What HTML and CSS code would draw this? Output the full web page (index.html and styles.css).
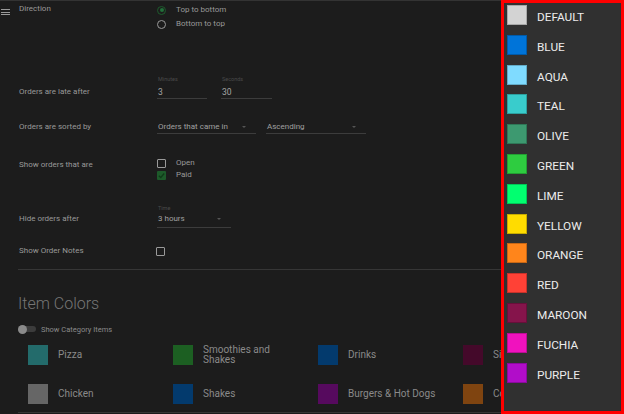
FILE: index.html
```html
<!DOCTYPE html>
<html lang="en">
<head>
<meta charset="utf-8">
<title>Settings</title>
<link rel="stylesheet" href="styles.css">
</head>
<body>
<div class="app">
  <div class="rail">
    <span class="menu"><i></i><i></i><i></i></span>
  </div>
  <main class="content">
    <section class="row row-direction">
      <div class="label">Direction</div>
      <div class="control stack">
        <div class="opt opt-radio"><span class="radio on"></span>Top to bottom</div>
        <div class="opt opt-radio"><span class="radio"></span>Bottom to top</div>
      </div>
    </section>

    <section class="row row-late">
      <div class="label label-under-mini">Orders are late after</div>
      <div class="control fields">
        <div class="field field-min">
          <div class="mini">Minutes</div>
          <div class="value">3</div>
        </div>
        <div class="field field-sec">
          <div class="mini">Seconds</div>
          <div class="value">30</div>
        </div>
      </div>
    </section>

    <section class="row row-sorted">
      <div class="label">Orders are sorted by</div>
      <div class="control selects">
        <div class="select select-order">Orders that came in<span class="caret"></span></div>
        <div class="select select-dir">Ascending<span class="caret"></span></div>
      </div>
    </section>

    <section class="row row-show">
      <div class="label label-show">Show orders that are</div>
      <div class="control stack">
        <div class="opt opt-check"><span class="check"></span>Open</div>
        <div class="opt opt-check"><span class="check on"><svg viewBox="0 0 10 10" width="9" height="9"><path d="M2 5.2 L4.2 7.2 L8 2.8" fill="none" stroke="#0f3a18" stroke-width="1.4"/></svg></span>Paid</div>
      </div>
    </section>

    <section class="row row-hide">
      <div class="label label-under-mini2">Hide orders after</div>
      <div class="control">
        <div class="field field-time">
          <div class="mini">Time</div>
          <div class="select select-time">3 hours<span class="caret"></span></div>
        </div>
      </div>
    </section>

    <section class="row row-notes">
      <div class="label">Show Order Notes</div>
      <div class="control"><span class="check check-notes"></span></div>
    </section>

    <div class="divider"></div>

    <h2 class="heading">Item Colors</h2>

    <div class="toggle-row">
      <span class="toggle"><span class="knob"></span></span>
      <span>Show Category Items</span>
    </div>

    <div class="item-grid">
      <div class="item"><span class="swatch" style="background:#236b6b"></span><span class="name">Pizza</span></div>
      <div class="item"><span class="swatch" style="background:#1c5f22"></span><span class="name">Smoothies and Shakes</span></div>
      <div class="item"><span class="swatch" style="background:#033a6d"></span><span class="name">Drinks</span></div>
      <div class="item"><span class="swatch" style="background:#44092a"></span><span class="name">Sides</span></div>
      <div class="item"><span class="swatch" style="background:#666666"></span><span class="name">Chicken</span></div>
      <div class="item"><span class="swatch" style="background:#033a6d"></span><span class="name">Shakes</span></div>
      <div class="item"><span class="swatch" style="background:#560a5e"></span><span class="name">Burgers &amp; Hot Dogs</span></div>
      <div class="item"><span class="swatch" style="background:#7f4410"></span><span class="name">Combos</span></div>
    </div>

    <div class="divider divider-bottom"></div>
  </main>

  <aside class="color-menu">
    <ul class="color-list">
      <li><span class="chip chip-default" style="background:#d3d3d3"></span>DEFAULT</li>
      <li><span class="chip" style="background:#0074d9"></span>BLUE</li>
      <li><span class="chip" style="background:#7fdbff"></span>AQUA</li>
      <li><span class="chip" style="background:#39cccc"></span>TEAL</li>
      <li><span class="chip" style="background:#3d9970"></span>OLIVE</li>
      <li><span class="chip" style="background:#2ecc40"></span>GREEN</li>
      <li><span class="chip" style="background:#01ff70"></span>LIME</li>
      <li><span class="chip" style="background:#ffdc00"></span>YELLOW</li>
      <li><span class="chip" style="background:#ff851b"></span>ORANGE</li>
      <li><span class="chip" style="background:#ff4136"></span>RED</li>
      <li><span class="chip" style="background:#85144b"></span>MAROON</li>
      <li><span class="chip" style="background:#f012be"></span>FUCHIA</li>
      <li><span class="chip" style="background:#b10dc9"></span>PURPLE</li>
    </ul>
  </aside>
</div>
</body>
</html>
```

FILE: styles.css
```css
* { box-sizing: border-box; }

html, body {
  margin: 0;
  padding: 0;
  width: 624px;
  height: 414px;
  overflow: hidden;
  background: #1c1c1c;
}

body {
  font-family: Roboto, "Liberation Sans", Arial, sans-serif;
  color: #9a9a9a;
}

.app {
  position: relative;
  display: flex;
  width: 624px;
  height: 414px;
  overflow: hidden;
  box-shadow: inset 0 1px 0 #333;
}

.rail {
  flex: none;
  width: 18px;
  padding: 9px 0 0 1px;
}

.menu {
  display: flex;
  flex-direction: column;
  gap: 1.6px;
  width: 9px;
}

.menu i {
  display: block;
  height: 1px;
  background: #9a9a9a;
}

.content {
  flex: none;
  width: 700px;
}

.row {
  display: flex;
}

.label {
  flex: none;
  width: 139px;
  font-size: 8px;
  line-height: 12px;
  color: #999;
  padding-left: 1px;
}

.control {
  display: flex;
}

.stack {
  flex-direction: column;
}

/* Direction */
.row-direction {
  padding-top: 3px;
}

.opt {
  display: flex;
  align-items: center;
  font-size: 8px;
  color: #999;
}

.opt-radio {
  line-height: 14px;
  gap: 10px;
}

.radio {
  width: 9px;
  height: 9px;
  border-radius: 50%;
  border: 1px solid #9a9a9a;
  display: inline-flex;
  align-items: center;
  justify-content: center;
}

.radio.on {
  border: 1.5px solid #1d5a2c;
}

.radio.on::after {
  content: "";
  width: 4px;
  height: 4px;
  border-radius: 50%;
  background: #21703a;
}

/* Late after */
.row-late {
  margin-top: 43px;
}

.label-under-mini {
  padding-top: 12px;
}

.fields {
  gap: 14px;
}

.field-min { width: 50px; }
.field-sec { width: 51px; }
.field-time { width: 74px; }

.mini {
  font-size: 5.5px;
  line-height: 10px;
  color: #4a4a4a;
  padding-left: 1px;
}

.value {
  margin-top: 2px;
  font-size: 8.5px;
  line-height: 12px;
  color: #a5a5a5;
  border-bottom: 1px solid #3c3c3c;
  padding-left: 1px;
}

/* Sorted by */
.row-sorted {
  margin-top: 22px;
}

.selects {
  gap: 10px;
}

.select {
  position: relative;
  font-size: 8px;
  line-height: 12px;
  color: #a0a0a0;
  border-bottom: 1px solid #3c3c3c;
  padding-left: 1px;
}

.select-order { width: 99px; }
.select-dir { width: 100px; }

.caret {
  position: absolute;
  right: 10px;
  top: 5px;
  width: 0;
  height: 0;
  border-left: 2.5px solid transparent;
  border-right: 2.5px solid transparent;
  border-top: 2.5px solid #555;
}

/* Show orders */
.row-show {
  margin-top: 23px;
}

.label-show {
  padding-top: 2px;
}

.opt-check {
  line-height: 12px;
  gap: 10px;
}

.check {
  width: 9px;
  height: 9px;
  border: 1px solid #9a9a9a;
  border-radius: 1px;
  display: inline-flex;
  align-items: center;
  justify-content: center;
}

.check.on {
  border: none;
  background: #1d5a2a;
}

/* Hide orders */
.row-hide {
  margin-top: 22px;
}

.label-under-mini2 {
  padding-top: 10px;
}

.select-time {
  padding-bottom: 2px;
}

/* Notes */
.row-notes {
  margin-top: 17px;
  align-items: center;
}

.check-notes {
  margin-left: -1px;
}

.divider {
  margin-top: 12px;
  height: 1px;
  background: #363636;
}

.heading {
  margin: 24px 0 0 0;
  font-size: 16px;
  line-height: 20px;
  font-weight: 300;
  color: #767676;
}

.toggle-row {
  margin-top: 10px;
  display: flex;
  align-items: center;
  gap: 5px;
  height: 10px;
  font-size: 7.5px;
  color: #8a8a8a;
}

.toggle {
  position: relative;
  width: 18px;
  height: 6px;
  border-radius: 3px;
  background: #3c3c3c;
}

.knob {
  position: absolute;
  left: 0;
  top: -1.5px;
  width: 9px;
  height: 9px;
  border-radius: 50%;
  background: #8a8a8a;
}

.item-grid {
  margin-top: 11px;
  padding-left: 10px;
  display: grid;
  grid-template-columns: repeat(4, 145px);
  grid-auto-rows: 20px;
  row-gap: 19px;
}

.item {
  display: flex;
  align-items: center;
  gap: 10px;
}

.swatch {
  flex: none;
  width: 20px;
  height: 20px;
}

.name {
  max-width: 90px;
  font-size: 10px;
  line-height: 10px;
  color: #8a8a8a;
}

.divider-bottom {
  margin-top: 8px;
}

/* Color dropdown menu overlaying the page */
.color-menu {
  position: absolute;
  top: 0;
  left: 501px;
  width: 123px;
  height: 414px;
  border: 3px solid #ff0000;
  background: #303030;
}

.color-list {
  list-style: none;
  margin: 0;
  padding: 0 0 0 3px;
}

.color-list li {
  display: flex;
  align-items: flex-start;
  gap: 10px;
  height: 29.8px;
  padding-top: 2px;
  font-family: Roboto, "Liberation Sans", Arial, sans-serif;
  font-size: 11.8px;
  line-height: 24px;
  color: #ececec;
}

.chip {
  flex: none;
  width: 20px;
  height: 20px;
  border: 1px solid rgba(0, 0, 0, 0.22);
}

.chip-default {
  border-color: #a8a8a8;
}
```
